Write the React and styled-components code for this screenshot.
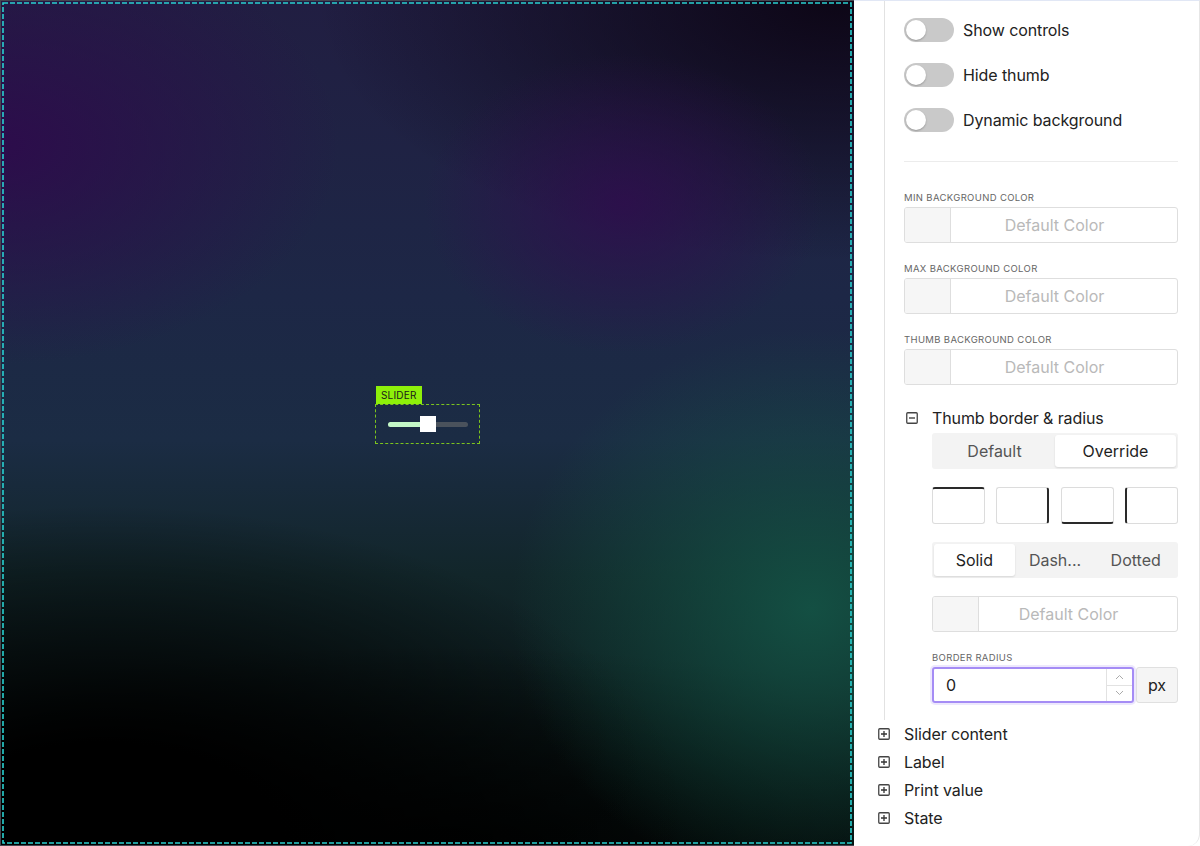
import React from 'react'
import styled, { createGlobalStyle } from 'styled-components'

const Global = createGlobalStyle`
  html, body {
    margin: 0;
    padding: 0;
    overflow: hidden;
    background: #fff;
  }
  body {
    font-family: "Inter", "Noto Sans", sans-serif;
    color: #222;
  }
`

const App = () => {
  return (
    <>
      <Global />
      <Page>
        <Canvas>
          <DashFrame width="100%" height="100%">
            <rect x="2" y="2" width="848" height="840" fill="none" stroke="#2ad0d0" strokeWidth="1.6" strokeDasharray="5 2" />
          </DashFrame>
          <Widget>
            <Badge>SLIDER</Badge>
            <Track>
              <Fill />
              <Thumb />
            </Track>
          </Widget>
        </Canvas>

        <Panel>
          <Group>
            <ToggleRow><Switch><Knob /></Switch>Show controls</ToggleRow>
            <ToggleRow><Switch><Knob /></Switch>Hide thumb</ToggleRow>
            <ToggleRow><Switch><Knob /></Switch>Dynamic background</ToggleRow>
            <Divider />

            <Field>
              <Label>Min background color</Label>
              <ColorBox><Swatch /><Placeholder>Default Color</Placeholder></ColorBox>
            </Field>
            <Field>
              <Label>Max background color</Label>
              <ColorBox><Swatch /><Placeholder>Default Color</Placeholder></ColorBox>
            </Field>
            <Field>
              <Label>Thumb background color</Label>
              <ColorBox><Swatch /><Placeholder>Default Color</Placeholder></ColorBox>
            </Field>

            <SubHeader>
              <TreeIcon><svg width="12" height="12" viewBox="0 0 12 12"><rect x="0.75" y="0.75" width="10.5" height="10.5" rx="1" fill="none" stroke="#444" strokeWidth="1.3" /><path d="M3 6h6" stroke="#333" strokeWidth="1.3" /></svg></TreeIcon>
              Thumb border &amp; radius
            </SubHeader>
            <SubBody>
              <Segmented>
                <Segment>Default</Segment>
                <Segment active>Override</Segment>
              </Segmented>
              <SideRow>
                <SideBox side="top" />
                <SideBox side="right" />
                <SideBox side="bottom" />
                <SideBox side="left" />
              </SideRow>
              <Segmented>
                <Segment active>Solid</Segment>
                <Segment>Dash...</Segment>
                <Segment>Dotted</Segment>
              </Segmented>
              <ColorBox><Swatch /><Placeholder>Default Color</Placeholder></ColorBox>
              <Field>
                <Label>Border radius</Label>
                <NumberRow>
                  <NumberInput>
                    <NumberValue>0</NumberValue>
                    <Spinner>
                      <SpinBtn><svg width="9" height="6" viewBox="0 0 9 6"><path d="M1 5l3.5-3.5L8 5" fill="none" stroke="#aaa" strokeWidth="1" /></svg></SpinBtn>
                      <SpinBtn><svg width="9" height="6" viewBox="0 0 9 6"><path d="M1 1l3.5 3.5L8 1" fill="none" stroke="#aaa" strokeWidth="1" /></svg></SpinBtn>
                    </Spinner>
                  </NumberInput>
                  <Unit>px</Unit>
                </NumberRow>
              </Field>
            </SubBody>
          </Group>

          {['Slider content', 'Label', 'Print value', 'State'].map(t => (
            <TreeRow key={t}>
              <TreeIcon><svg width="12" height="12" viewBox="0 0 12 12"><rect x="0.75" y="0.75" width="10.5" height="10.5" rx="1" fill="none" stroke="#444" strokeWidth="1.3" /><path d="M3 6h6M6 3v6" stroke="#333" strokeWidth="1.3" /></svg></TreeIcon>
              {t}
            </TreeRow>
          ))}
        </Panel>
      </Page>
    </>
  )
}

const Page = styled.div`
display: flex;
width: 1200px;
height: 846px;
overflow: hidden;
`

const Canvas = styled.div`
position: relative;
flex: 0 0 854px;
height: 846px;
box-sizing: border-box;
border: 1px solid #45454f;
border-right: none;
display: flex;
align-items: center;
justify-content: center;
background:
  radial-gradient(ellipse 300px 280px at 95% 72%, rgba(20, 84, 70, 0.9), rgba(20, 84, 70, 0) 100%),
  radial-gradient(ellipse 200px 150px at 73% 24%, rgba(48, 12, 78, 0.8), rgba(48, 12, 78, 0) 100%),
  radial-gradient(ellipse 340px 220px at 0% 17%, rgba(46, 10, 76, 0.9), rgba(46, 10, 76, 0) 100%),
  radial-gradient(ellipse 520px 260px at 98% 0%, rgba(12, 5, 20, 0.95), rgba(12, 5, 20, 0) 100%),
  radial-gradient(ellipse 600px 340px at 12% 100%, rgba(0, 0, 0, 1) 30%, rgba(0, 0, 0, 0) 100%),
  radial-gradient(ellipse 700px 200px at 50% 100%, rgba(0, 0, 0, 0.9), rgba(0, 0, 0, 0) 100%),
  linear-gradient(180deg, #211e42 0%, #1d2746 35%, #1b2c44 52%, #12262a 68%, #071211 100%);
`

const DashFrame = styled.svg`
position: absolute;
inset: 0;
pointer-events: none;
`

const Widget = styled.div`
position: relative;
width: 105px;
height: 40px;
box-sizing: border-box;
border: 1px dashed #7cc41e;
display: flex;
align-items: center;
justify-content: center;
margin-top: 2px;
`

const Badge = styled.div`
position: absolute;
left: 0;
top: -19px;
height: 18px;
padding: 0 5px;
background: #8ef00a;
color: #1a1a1a;
font-size: 10px;
line-height: 18px;
letter-spacing: 0.2px;
`

const Track = styled.div`
position: relative;
width: 80px;
height: 5px;
border-radius: 3px;
background: #4a525c;
`

const Fill = styled.div`
position: absolute;
left: 0;
top: 0;
bottom: 0;
width: 40px;
border-radius: 3px 0 0 3px;
background: #c4f8c8;
`

const Thumb = styled.div`
position: absolute;
left: 32px;
top: -6px;
width: 16px;
height: 16px;
background: #fff;
`

const Panel = styled.div`
flex: 1;
height: 846px;
box-sizing: border-box;
border-top: 1px solid #e1e7f5;
border-right: 1px solid #e6e6e6;
border-bottom-right-radius: 12px;
padding: 0 21px 0 24px;
background: #fff;
`

const Group = styled.div`
margin-left: 6px;
border-left: 1px solid #e2e2e2;
padding: 17px 0 17px 19px;
display: flex;
flex-direction: column;
`

const ToggleRow = styled.div`
display: flex;
align-items: center;
gap: 9px;
height: 24px;
margin-bottom: 21px;
font-size: 16px;
letter-spacing: -0.1px;
color: #222;
&:nth-of-type(3) { margin-bottom: 0; }
`

const Switch = styled.div`
position: relative;
width: 50px;
height: 24px;
border-radius: 12px;
background: #c9c9c9;
flex-shrink: 0;
`

const Knob = styled.div`
position: absolute;
left: 2px;
top: 2px;
width: 20px;
height: 20px;
border-radius: 50%;
background: #fff;
box-shadow: 0 1px 2px rgba(0, 0, 0, 0.25);
`

const Divider = styled.div`
height: 1px;
background: #ececec;
margin: 29px 0 10px;
`

const Field = styled.div`
display: flex;
flex-direction: column;
gap: 3px;
margin-top: 20px;
`

const Label = styled.div`
font-size: 9.5px;
line-height: 12px;
letter-spacing: 0.35px;
text-transform: uppercase;
color: #666;
`

const ColorBox = styled.div`
display: flex;
height: 36px;
box-sizing: border-box;
border: 1px solid #dedede;
border-radius: 3px;
overflow: hidden;
`

const Swatch = styled.div`
width: 45px;
flex-shrink: 0;
background: #f6f6f6;
border-right: 1px solid #dedede;
`

const Placeholder = styled.div`
flex: 1;
display: flex;
align-items: center;
justify-content: center;
padding-right: 19px;
font-size: 16px;
color: #b9b9b9;
`

const SubHeader = styled.div`
display: flex;
align-items: center;
height: 20px;
margin-top: 23px;
font-size: 16px;
letter-spacing: -0.1px;
color: #222;
gap: 14px;
padding-left: 2px;
`

const TreeIcon = styled.span`
display: flex;
width: 12px;
height: 12px;
`

const SubBody = styled.div`
display: flex;
flex-direction: column;
gap: 18px;
padding-left: 28px;
margin-top: 5px;
& > ${Field} { margin-top: 2px; }
`

const Segmented = styled.div`
display: flex;
height: 36px;
box-sizing: border-box;
padding: 2px;
border-radius: 3px;
background: #f3f3f3;
`

const Segment = styled.div`
flex: 1;
display: flex;
align-items: center;
justify-content: center;
font-size: 16px;
border-radius: 3px;
color: ${p => (p.active ? '#1e1e1e' : '#555')};
background: ${p => (p.active ? '#fff' : 'transparent')};
box-shadow: ${p => (p.active ? '0 1px 2px rgba(0,0,0,0.12)' : 'none')};
`

const SideRow = styled.div`
display: flex;
justify-content: space-between;
`

const SideBox = styled.div`
width: 53px;
height: 37px;
box-sizing: border-box;
border: 1px solid #dcdcdc;
border-radius: 3px;
border-${p => p.side}: 2px solid #2a2a2a;
`

const NumberRow = styled.div`
display: flex;
gap: 2px;
height: 36px;
`

const NumberInput = styled.div`
flex: 1;
display: flex;
box-sizing: border-box;
border: 2px solid #a58cf5;
border-radius: 3px;
box-shadow: 0 0 0 2px rgba(165, 140, 245, 0.2);
`

const NumberValue = styled.div`
flex: 1;
display: flex;
align-items: center;
padding-left: 12px;
font-size: 16px;
color: #222;
`

const Spinner = styled.div`
width: 25px;
display: flex;
flex-direction: column;
border-left: 1px solid #e2e2e2;
`

const SpinBtn = styled.div`
flex: 1;
display: flex;
align-items: center;
justify-content: center;
& + & { border-top: 1px solid #e2e2e2; }
`

const Unit = styled.div`
width: 42px;
display: flex;
align-items: center;
justify-content: center;
box-sizing: border-box;
border: 1px solid #e0e0e0;
border-radius: 3px;
background: #f5f5f5;
font-size: 16px;
color: #222;
`

const TreeRow = styled.div`
display: flex;
align-items: center;
gap: 14px;
height: 28px;
font-size: 16px;
letter-spacing: -0.1px;
color: #222;
`

export default App
